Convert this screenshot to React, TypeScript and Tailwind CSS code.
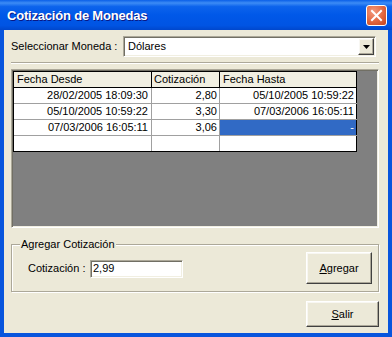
export default function App() {
  const rows: [string, string, string][] = [
    ["28/02/2005 18:09:30", "2,80", "05/10/2005 10:59:22"],
    ["05/10/2005 10:59:22", "3,30", "07/03/2006 16:05:11"],
    ["07/03/2006 16:05:11", "3,06", "-"],
    ["", "", ""],
  ];
  const sunken =
    "border border-t-[#ACA899] border-l-[#ACA899] border-r-white border-b-white shadow-[inset_1px_1px_0_#716F64,inset_-1px_-1px_0_#F1EFE2]";
  const raised =
    "border border-t-white border-l-white border-r-[#404040] border-b-[#404040] shadow-[inset_-1px_-1px_0_#ACA899,inset_1px_1px_0_#F8F7F2] bg-[#ECE9D8]";
  return (
    <div className="w-[392px] h-[337px] flex flex-col bg-[#0855DD] font-['Liberation_Sans',Arial,sans-serif] text-[11px] leading-none text-black overflow-hidden">
      {/* Title bar */}
      <div className="h-[30px] shrink-0 flex items-center justify-between pl-[7px] pr-[5px] bg-[linear-gradient(to_bottom,#0A5FE8_0%,#3D8CF5_10%,#0C63EC_22%,#0058E8_50%,#0054E3_85%,#0047CC_100%)]">
        <span className="text-white font-bold text-[13px] tracking-[-0.2px] [text-shadow:1px_1px_0_#0A1883] mt-[1px]">
          Cotización de Monedas
        </span>
        <div className="w-[21px] h-[21px] rounded-[3px] border border-white bg-[radial-gradient(circle_at_35%_30%,#F39A7E_0%,#E2663F_55%,#C4431C_100%)] flex items-center justify-center">
          <svg width="13" height="13" viewBox="0 0 13 13">
            <path d="M2 2 L11 11 M11 2 L2 11" stroke="white" strokeWidth="2" strokeLinecap="square" />
          </svg>
        </div>
      </div>

      {/* Client area */}
      <div className="flex-1 mx-[4px] mb-[4px] bg-[#ECE9D8] flex flex-col pl-[7px] pr-[9px] pt-[6px]">
        {/* Combo row */}
        <div className="h-[21px] flex items-center mr-[3px]">
          <span className="w-[112px] shrink-0">Seleccionar Moneda :</span>
          <div className={`flex-1 h-[21px] bg-white flex items-center p-[1px] ${sunken}`}>
            <span className="flex-1 pl-[3px]">Dólares</span>
            <div className={`w-[16px] h-[17px] flex items-center justify-center ${raised}`}>
              <svg width="7" height="4" viewBox="0 0 7 4">
                <path d="M0 0 H7 L3.5 4 Z" fill="black" />
              </svg>
            </div>
          </div>
        </div>

        {/* Separator */}
        <div className="mt-[5px] h-[2px] border-t border-t-[#ACA899] border-b border-b-white" />

        {/* Grid */}
        <div className={`mt-[5px] h-[159px] bg-[#808080] p-[1px] ${sunken}`}>
          <div className="w-[344px] border-l border-t border-black">
            <div className="flex h-[16px] bg-[#F1EFE2] border-b border-black">
              <div className="w-[138px] border-r border-black pl-[3px] flex items-center">Fecha Desde</div>
              <div className="w-[68px] border-r border-black pl-[2px] flex items-center">Cotización</div>
              <div className="w-[137px] border-r border-black pl-[3px] flex items-center">Fecha Hasta</div>
            </div>
            {rows.map((r, i) => (
              <div
                key={i}
                className={`flex h-[16px] bg-white border-b ${i === rows.length - 1 ? "border-black" : "border-[#A0A0A0]"}`}
              >
                <div className="w-[138px] border-r border-[#A0A0A0] pr-[3px] flex items-center justify-end">{r[0]}</div>
                <div className="w-[68px] border-r border-[#A0A0A0] pr-[2px] flex items-center justify-end">{r[1]}</div>
                <div
                  className={`w-[137px] border-r border-black pr-[2px] flex items-center justify-end ${
                    i === 2 ? "bg-[#316AC5] text-white" : ""
                  }`}
                >
                  {r[2]}
                </div>
              </div>
            ))}
          </div>
        </div>

        {/* Group box */}
        <div className="relative mt-[16px] h-[48px] border border-[#ACA899] shadow-[inset_1px_1px_0_#fff,1px_1px_0_#fff] flex items-center">
          <span className="absolute -top-[6px] left-[8px] px-[1px] bg-[#ECE9D8]">Agregar Cotización</span>
          <span className="ml-[16px] w-[62px] shrink-0">Cotización :</span>
          <div className={`w-[93px] h-[18px] bg-white flex items-center pl-[2px] mt-[1px] ${sunken}`}>2,99</div>
          <div className="flex-1" />
          <div className={`w-[66px] h-[32px] mr-[6px] flex items-center justify-center ${raised}`}>
            <span>
              <span className="underline">A</span>gregar
            </span>
          </div>
        </div>

        {/* Salir */}
        <div className={`mt-[9px] self-end w-[73px] h-[26px] flex items-center justify-center ${raised}`}>
          <span>
            <span className="underline">S</span>alir
          </span>
        </div>
      </div>
    </div>
  );
}
